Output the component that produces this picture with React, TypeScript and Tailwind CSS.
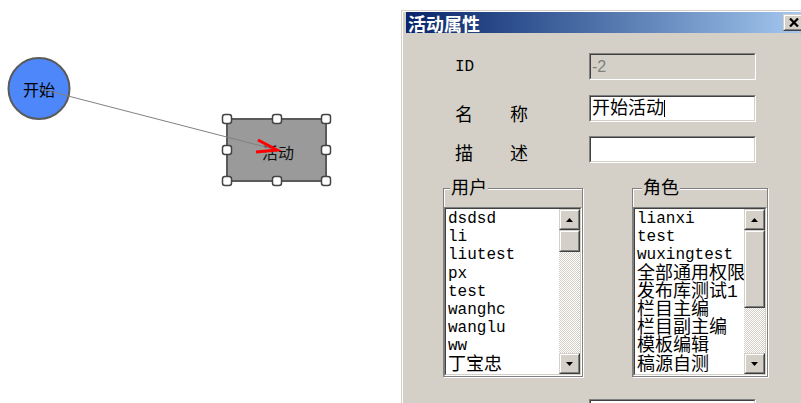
import React from "react";

const users = ["dsdsd", "li", "liutest", "px", "test", "wanghc", "wanglu", "ww", "丁宝忠"];
const roles = [
  "lianxi",
  "test",
  "wuxingtest",
  "全部通用权限",
  "发布库测试1",
  "栏目主编",
  "栏目副主编",
  "模板编辑",
  "稿源自测",
];

const hasCjk = (s: string) => /[\u4e00-\u9fff]/.test(s);

function Sunken({ outer, inner, children }: { outer: string; inner: string; children?: React.ReactNode }) {
  return (
    <div className={`border border-t-[#808080] border-l-[#808080] border-r-white border-b-white ${outer}`}>
      <div className={`h-full border border-t-[#404040] border-l-[#404040] border-r-[#d4d0c8] border-b-[#d4d0c8] ${inner}`}>
        {children}
      </div>
    </div>
  );
}

function Raised({ outer, children }: { outer: string; children?: React.ReactNode }) {
  return (
    <div className={`border border-t-[#d4d0c8] border-l-[#d4d0c8] border-r-[#404040] border-b-[#404040] ${outer}`}>
      <div className="h-full flex items-center justify-center border border-t-white border-l-white border-r-[#808080] border-b-[#808080] bg-[#d4d0c8]">
        {children}
      </div>
    </div>
  );
}

function ScrollBar({ thumb }: { thumb: string }) {
  return (
    <div className="w-[21px] h-full flex flex-col shrink-0">
      <Raised outer="h-[21px]">
        <svg width="7" height="4">
          <path d="M3.5 0 L7 4 L0 4Z" fill="#000" />
        </svg>
      </Raised>
      <div className="flex-1 flex flex-col bg-[image:repeating-conic-gradient(#d4d0c8_0%_25%,#ffffff_0%_50%)] bg-[length:2px_2px]">
        <Raised outer={thumb} />
      </div>
      <Raised outer="h-[21px]">
        <svg width="7" height="4">
          <path d="M0 0 L7 0 L3.5 4Z" fill="#000" />
        </svg>
      </Raised>
    </div>
  );
}

function ListBox({ items, thumb }: { items: string[]; thumb: string }) {
  return (
    <Sunken outer="h-[169px]" inner="bg-white flex">
      <div className="flex-1 overflow-hidden pl-[2px] pt-[1px]">
        {items.map((it) => (
          <div
            key={it}
            className={`h-[18.2px] leading-[18.2px] whitespace-nowrap text-black ${
              hasCjk(it) ? "text-[18px]" : "text-[16px]"
            }`}
          >
            {it}
          </div>
        ))}
      </div>
      <ScrollBar thumb={thumb} />
    </Sunken>
  );
}

function GroupBox({ title, width, labelLeft, children }: { title: string; width: string; labelLeft: string; children: React.ReactNode }) {
  return (
    <div className={`relative border border-[#808080] shadow-[inset_1px_1px_0_#ffffff,1px_1px_0_#ffffff] pt-[18px] ${width}`}>
      <span className={`absolute top-[-10px] bg-[#d4d0c8] px-[1px] text-[18px] leading-[20px] ${labelLeft}`}>{title}</span>
      {children}
    </div>
  );
}

function Diagram() {
  const handles = [
    [227, 119],
    [277, 119],
    [326, 119],
    [227, 150],
    [326, 150],
    [227, 181],
    [277, 181],
    [326, 181],
  ];
  return (
    <svg width="401" height="403">
      <circle cx="39" cy="88.5" r="30.5" fill="#4e87fa" stroke="#5a5a5a" strokeWidth="2" />
      <rect x="227" y="119" width="99" height="62" fill="#9a9a9a" stroke="#5a5a5a" strokeWidth="2" />
      <text x="39" y="89" textAnchor="middle" dominantBaseline="central" fontSize="16" fontFamily="Noto Sans CJK SC, sans-serif" fill="#000">
        开始
      </text>
      <text x="278" y="152" textAnchor="middle" dominantBaseline="central" fontSize="16" fontFamily="Noto Sans CJK SC, sans-serif" fill="#111">
        活动
      </text>
      <line x1="41" y1="89" x2="277" y2="150" stroke="#808080" strokeWidth="1" />
      <path d="M258 140 L277 150 L256 152" stroke="#ff0000" strokeWidth="3" fill="none" />
      {handles.map(([x, y]) => (
        <rect key={`${x}-${y}`} x={x - 4.5} y={y - 4.5} width="9" height="9" rx="2.5" fill="#fff" stroke="#444" strokeWidth="1.5" />
      ))}
    </svg>
  );
}

export default function App() {
  return (
    <div className="w-[801px] h-[403px] overflow-hidden bg-white flex">
      <div className="w-[401px] h-full shrink-0">
        <Diagram />
      </div>
      <div className="flex-1 pt-[10px]">
        <div className="w-[405px] h-[420px] bg-[#d4d0c8] border-l border-t border-[#d4d0c8] font-['Liberation_Mono','Noto_Sans_CJK_SC',monospace] text-black">
          <div className="h-full border-l border-t border-white pl-[3px]">
            <div className="h-[21px] flex items-center justify-between bg-linear-to-r from-[#0a246a] to-[#a6caf0] pr-[1px]">
              <span className="pl-[2px] text-[18px] leading-none font-bold text-white font-['Noto_Sans_CJK_SC',sans-serif]">活动属性</span>
              <Raised outer="w-[22px] h-[17px]">
                <svg width="10" height="9">
                  <path d="M1 0.5 L9 8.5 M9 0.5 L1 8.5" stroke="#000" strokeWidth="2.2" />
                </svg>
              </Raised>
            </div>

            <div className="pt-[20px] flex flex-col">
              <div className="flex items-center h-[27px]">
                <span className="w-[183px] pl-[49px] text-[16px]">ID</span>
                <Sunken outer="w-[167px] h-[27px]" inner="bg-[#d4d0c8] flex items-center pl-[1px]">
                  <span className="text-[16px] text-[#808080] font-['Liberation_Sans',sans-serif]">-2</span>
                </Sunken>
              </div>
              <div className="flex items-center h-[27px] mt-[15px]">
                <span className="w-[183px] pl-[49px] text-[18px] flex gap-[37px] pt-[15px]">
                  <span>名</span>
                  <span>称</span>
                </span>
                <Sunken outer="w-[167px] h-[27px]" inner="bg-white flex items-center pl-[1px]">
                  <span className="text-[18px] leading-none">开始活动</span>
                  <span className="w-[1px] h-[17px] bg-black" />
                </Sunken>
              </div>
              <div className="flex items-center h-[27px] mt-[14px]">
                <span className="w-[183px] pl-[49px] text-[18px] flex gap-[37px] pt-[12px]">
                  <span>描</span>
                  <span>述</span>
                </span>
                <Sunken outer="w-[167px] h-[27px]" inner="bg-white" />
              </div>
            </div>

            <div className="flex pl-[37px] gap-[49px] mt-[25px]">
              <GroupBox title="用户" width="w-[140px]" labelLeft="left-[6px]">
                <ListBox items={users} thumb="h-[22px]" />
              </GroupBox>
              <GroupBox title="角色" width="w-[136px]" labelLeft="left-[9px]">
                <ListBox items={roles} thumb="h-[78px]" />
              </GroupBox>
            </div>

            <div className="flex pl-[183px] mt-[22px]">
              <Sunken outer="w-[167px] h-[27px]" inner="bg-white" />
            </div>
          </div>
        </div>
      </div>
    </div>
  );
}
